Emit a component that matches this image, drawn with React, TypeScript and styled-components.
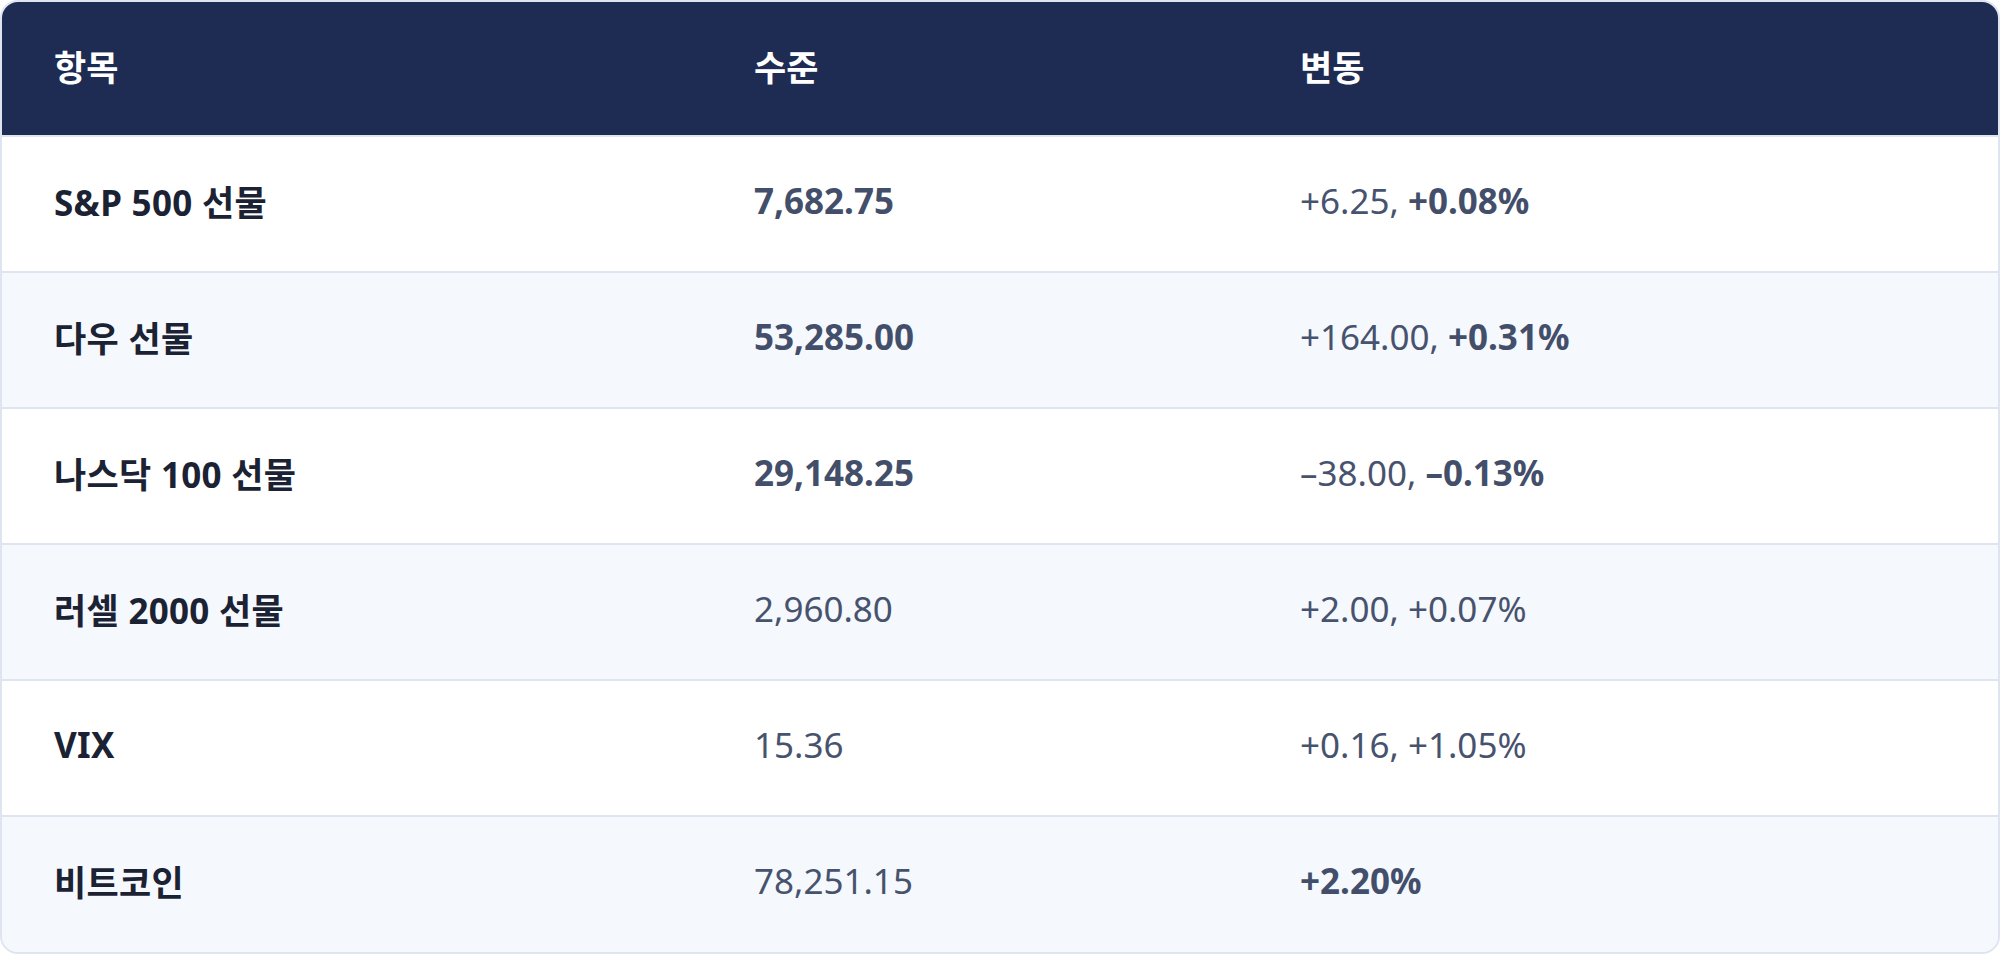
import React from "react";
import styled, { createGlobalStyle } from "styled-components";

const Global = createGlobalStyle`
  html, body { margin: 0; padding: 0; background: #ffffff; }
  body { font-family: "Noto Sans", "Noto Sans CJK KR", sans-serif; }
`;

const Card = styled.div`
  width: 2000px;
  box-sizing: border-box;
  border: 2px solid #dfe5f0;
  border-radius: 18px;
  overflow: hidden;
  background: #ffffff;
`;

const Table = styled.table`
  width: 100%;
  border-collapse: collapse;
  table-layout: fixed;
  font-family: "Noto Sans", "Noto Sans CJK KR", sans-serif;
  font-size: 35px;
`;

const HeadRow = styled.tr`
  background: #1e2b53;
  height: 134px;
`;

const Th = styled.th`
  text-align: left;
  color: #ffffff;
  font-weight: 700;
  padding: 0 0 6px 52px;
  vertical-align: middle;
`;

const Row = styled.tr<{ $alt: boolean }>`
  background: ${(p) => (p.$alt ? "#f5f8fc" : "#ffffff")};
  height: 136px;
  border-top: 2px solid #dfe5f0;
`;

const NameCell = styled.td`
  padding: 0 0 8px 52px;
  color: #1b2233;
  font-weight: 700;
  letter-spacing: 0.3px;
  vertical-align: middle;
`;

const ValueCell = styled.td`
  padding: 0 0 8px 52px;
  color: #47536e;
  font-weight: 400;
  vertical-align: middle;
`;

const Strong = styled.span`
  font-weight: 700;
  color: #434f6a;
`;

type Part = { text: string; bold?: boolean };
type Item = { name: string; level: Part; change: Part[] };

const rows: Item[] = [
  { name: "S&P 500 선물", level: { text: "7,682.75", bold: true }, change: [{ text: "+6.25, " }, { text: "+0.08%", bold: true }] },
  { name: "다우 선물", level: { text: "53,285.00", bold: true }, change: [{ text: "+164.00, " }, { text: "+0.31%", bold: true }] },
  { name: "나스닥 100 선물", level: { text: "29,148.25", bold: true }, change: [{ text: "–38.00, " }, { text: "–0.13%", bold: true }] },
  { name: "러셀 2000 선물", level: { text: "2,960.80" }, change: [{ text: "+2.00, +0.07%" }] },
  { name: "VIX", level: { text: "15.36" }, change: [{ text: "+0.16, +1.05%" }] },
  { name: "비트코인", level: { text: "78,251.15" }, change: [{ text: "+2.20%", bold: true }] },
];

const renderPart = (p: Part, i: number) =>
  p.bold ? <Strong key={i}>{p.text}</Strong> : <React.Fragment key={i}>{p.text}</React.Fragment>;

export default function App() {
  return (
    <>
      <Global />
      <Card>
        <Table>
          <colgroup>
            <col style={{ width: "700px" }} />
            <col style={{ width: "546px" }} />
            <col />
          </colgroup>
          <thead>
            <HeadRow>
              <Th>항목</Th>
              <Th>수준</Th>
              <Th>변동</Th>
            </HeadRow>
          </thead>
          <tbody>
            {rows.map((r, i) => (
              <Row key={r.name} $alt={i % 2 === 1}>
                <NameCell>{r.name}</NameCell>
                <ValueCell>{renderPart(r.level, 0)}</ValueCell>
                <ValueCell>{r.change.map(renderPart)}</ValueCell>
              </Row>
            ))}
          </tbody>
        </Table>
      </Card>
    </>
  );
}
